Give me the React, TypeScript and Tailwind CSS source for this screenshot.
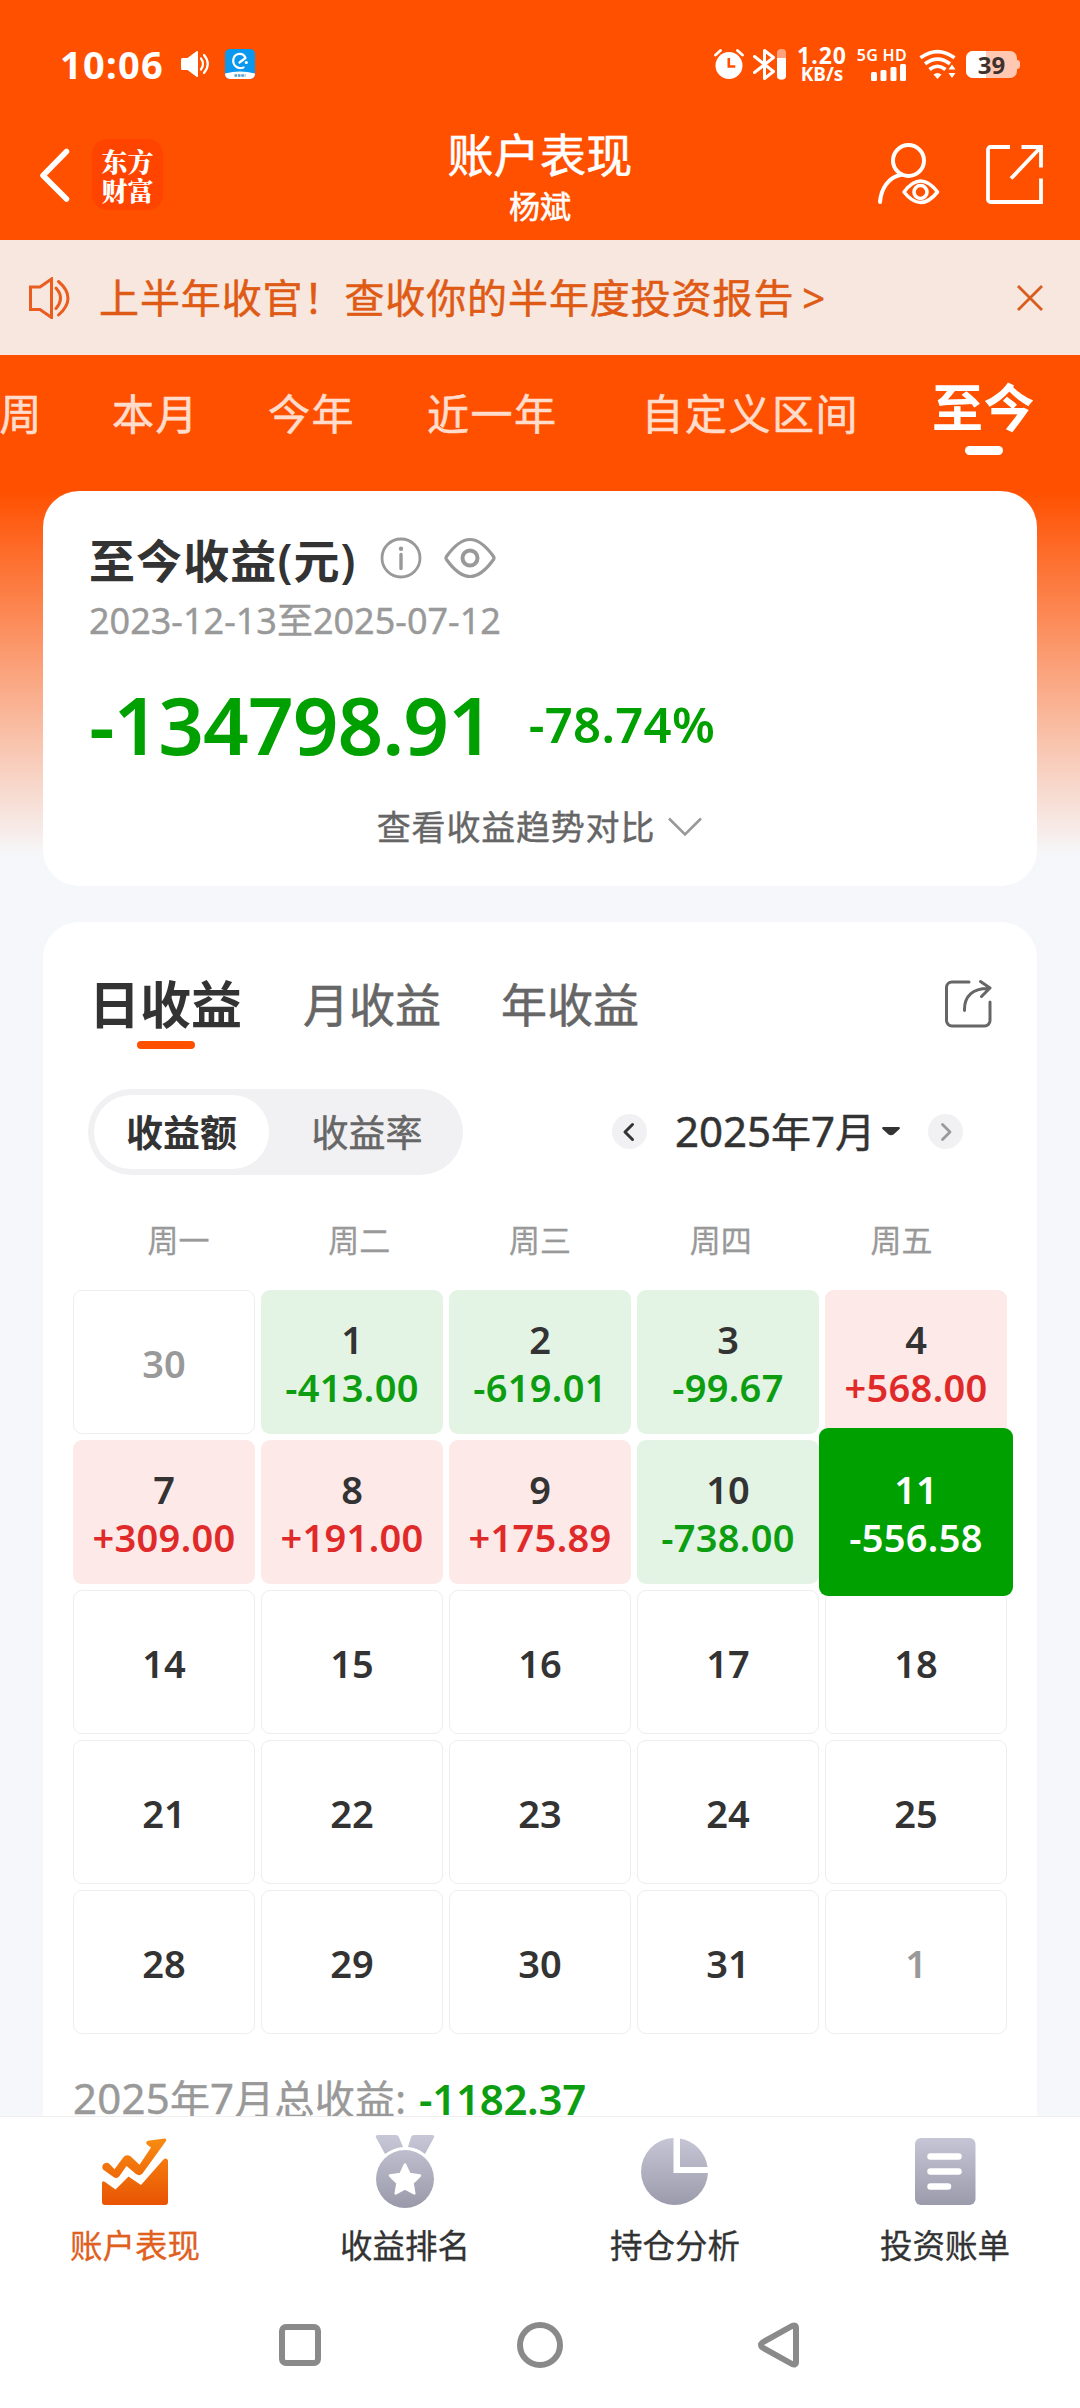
import type { ReactNode } from "react";
import clsx from "clsx";

type DayCell = {
  day: string;
  value?: string;
  muted?: boolean;
  selected?: boolean;
};

const ranges = [
  { label: "本月", className: "ml-[69px]" },
  { label: "今年", className: "ml-[69px]" },
  { label: "近一年", className: "ml-[72px]" },
  { label: "自定义区间", className: "ml-[84px]" },
];

const weekdays = ["周一", "周二", "周三", "周四", "周五"];

const days: DayCell[] = [
  { day: "30", muted: true },
  { day: "1", value: "-413.00" },
  { day: "2", value: "-619.01" },
  { day: "3", value: "-99.67" },
  { day: "4", value: "+568.00" },
  { day: "7", value: "+309.00" },
  { day: "8", value: "+191.00" },
  { day: "9", value: "+175.89" },
  { day: "10", value: "-738.00" },
  { day: "11", value: "-556.58", selected: true },
  { day: "14" },
  { day: "15" },
  { day: "16" },
  { day: "17" },
  { day: "18" },
  { day: "21" },
  { day: "22" },
  { day: "23" },
  { day: "24" },
  { day: "25" },
  { day: "28" },
  { day: "29" },
  { day: "30" },
  { day: "31" },
  { day: "1", muted: true },
];

/* ── Status bar ── */
function StatusBar() {
  return (
    <div className="h-[114px] pt-[14px] pl-[60px] pr-[60px] flex items-center text-white shrink-0">
      <span className="w-[104px] text-[38px] leading-none font-bold tracking-[1.3px] whitespace-nowrap">
        10:06
      </span>
      <svg className="ml-[17px]" width="29" height="28" viewBox="0 0 29 28">
        <path d="M1.5 8h5L15.500 1.200q1.500-.8 1.500.8v24q0 1.600-1.500.8L6.500 20h-5Q0 20 0 18.500v-9Q0 8 1.500 8z" fill="#fff" />
        <path d="M20 8.500q4 5.500 0 11M23 5q7.500 9 0 18" fill="none" stroke="#fff" strokeWidth="2.200" strokeLinecap="round" />
      </svg>
      <svg className="ml-[15px]" width="30" height="30" viewBox="0 0 30 30">
        <rect width="30" height="30" rx="5" fill="#0a97ee" />
        <path d="M0 24.500q15-4 30 0V25a5 5 0 0 1-5 5H5a5 5 0 0 1-5-5z" fill="#fff" />
        <path d="M14.500 13.500l6-4.500C18.500 3.500 10.500 3.500 8.500 9.500c-1.500 7 4 11 10 9" fill="none" stroke="#fff" strokeWidth="2.200" strokeLinecap="round" strokeLinejoin="round" />
        <circle cx="21.300" cy="13.500" r="1.600" fill="#fff" />
        <path d="M9.500 26.500h11" stroke="#5b9ac4" strokeWidth="2.600" strokeDasharray="2.600 .8" />
      </svg>

      <div className="ml-auto flex items-center">
        <svg width="30" height="30" viewBox="0 0 30 30">
          <circle cx="15" cy="16.500" r="13.500" fill="#fff" />
          <path d="M1.500 6l5-4.500M28.500 6l-5-4.500" stroke="#fff" strokeWidth="2.800" strokeLinecap="round" />
          <path d="M14.800 9v8.500h6.500" fill="none" stroke="#ff5000" strokeWidth="2.600" />
        </svg>
        <svg className="ml-[9px]" width="34" height="31" viewBox="0 0 34 31">
          <path d="M1.500 7.500l19 15-9 7V1.500l9 7-19 15" fill="none" stroke="#fff" strokeWidth="3" strokeLinecap="round" strokeLinejoin="round" />
          <rect x="24" y="0" width="9" height="30.500" rx="4" fill="#ffa37d" />
          <path d="M24 9h9v17.500a4 4 0 0 1-4 4h-1a4 4 0 0 1-4-4z" fill="#fff" />
        </svg>
        <div className="ml-[11px] w-[48px] flex flex-col items-center font-bold leading-none">
          <span className="text-[23px] h-[19px] leading-[19px] tracking-[1px]">1.20</span>
          <span className="text-[19px] h-[18px] leading-[18px]">KB/s</span>
        </div>
        <div className="ml-[11px] w-[50px] flex flex-col items-end">
          <span className="text-[16px] h-[17px] leading-[16px] font-semibold whitespace-nowrap tracking-[0.3px]">5G HD</span>
          <svg width="36" height="17" viewBox="0 0 36 17">
            <rect x="0" y="8" width="6" height="9" rx="1.500" fill="#fff" />
            <rect x="9.500" y="6" width="6" height="11" rx="1.500" fill="#fff" />
            <rect x="19.500" y="3" width="6" height="14" rx="1.500" fill="#fff" />
            <rect x="29" y="0" width="6" height="17" rx="1.500" fill="#fff" />
          </svg>
        </div>
        <svg className="ml-[12px]" width="38" height="31" viewBox="0 0 38 31">
          <g fill="none" stroke="#fff" strokeWidth="3.600">
            <path d="M1.500 8.800q17-12.500 34 0" />
            <path d="M6 14.800q12.500-9.500 25 0" />
            <path d="M10.500 20.500q8-6.500 16 0" />
          </g>
          <path d="M14.500 25.500q4-3 8 0L18.500 30z" fill="#fff" />
          <path d="M33 15.500l3.500 5h-7zM33 29l3.500-5h-7z" fill="#fff" />
        </svg>
        <div className="ml-[9px] relative w-[51px] h-[27px] rounded-[7px] bg-[#ffc8b2]">
          <div className="w-[20px] h-full rounded-l-[7px] bg-white" />
          <span className="absolute inset-0 text-center text-[24px] leading-[27px] font-bold text-[#3d322d]">
            39
          </span>
        </div>
        <div className="w-[3px] h-[9px] rounded-r-[3px] bg-[#ffc8b2]" />
      </div>
    </div>
  );
}

/* ── Title bar ── */
function TitleBar() {
  return (
    <div className="h-[126px] px-[36px] flex justify-between shrink-0 text-white">
      <div className="w-[220px] flex pt-[25px]">
        <svg className="mt-[8px]" width="36" height="56" viewBox="0 0 36 56">
          <path d="M30.500 4.500L7 28.500l23.500 23.500" fill="none" stroke="#fff" strokeWidth="5.500" strokeLinecap="round" strokeLinejoin="round" />
        </svg>
        <div className="ml-[20px] w-[71px] h-[71px] rounded-[15px] bg-[#ff4400] flex flex-col items-center justify-center text-[26px] leading-[29px] font-black font-['Noto_Serif_CJK_SC','Noto_Sans_CJK_SC',serif]">
          <span>东方</span>
          <span>财富</span>
        </div>
      </div>
      <div className="flex flex-col items-center [-webkit-text-stroke:0.6px]">
        <span className="mt-[12px] text-[46px] leading-[56px] tracking-[0.3px]">账户表现</span>
        <span className="mt-[6px] text-[31px] leading-[36px]">杨斌</span>
      </div>
      <div className="w-[220px] flex justify-end pt-[28px]">
        <svg width="64" height="64" viewBox="0 0 64 64" fill="none" stroke="#fff" strokeWidth="4" strokeLinecap="round">
          <circle cx="31.500" cy="18.500" r="15.500" />
          <path d="M3 60c1-13 8-25 22-27.500" />
          <path d="M27 50Q43.500 28 60.500 50 43.500 71 27 50z" strokeLinejoin="round" strokeWidth="3.600" />
          <circle cx="43.500" cy="50" r="6.500" strokeWidth="3.600" />
        </svg>
        <svg className="ml-[45px] mt-[3px]" width="58" height="59" viewBox="0 0 58 59" fill="none" stroke="#fff" strokeWidth="3.800">
          <path d="M24 2H4.500A2.500 2.500 0 0 0 2 4.500v50A2.500 2.500 0 0 0 4.500 57H55V33.500" />
          <path d="M35.500 2H55v20.500M54 3L25 33.500" />
        </svg>
      </div>
    </div>
  );
}

/* ── Notice strip ── */
function Notice() {
  return (
    <div className="h-[115px] pl-[29px] pr-[36px] flex items-center shrink-0 bg-[#f7e7df] text-[#df5a14] [-webkit-text-stroke:0.5px]">
      <svg width="42" height="42" viewBox="0 0 42 42" fill="none" stroke="#ea5c20" strokeWidth="3">
        <path d="M1.500 10h9.500L22.500 2v38.500L11 32.500H1.500z" />
        <path d="M27 11q9 10 0 20.500M29.500 4.500q19 16.500 0 33.500" strokeLinecap="round" />
      </svg>
      <span className="ml-[28px] text-[40px] leading-none tracking-[0.9px] whitespace-nowrap">
        上半年收官！查收你的半年度投资报告
      </span>
      <span className="ml-[8px] text-[40px] leading-none">&gt;</span>
      <svg className="ml-auto" width="28" height="28" viewBox="0 0 28 28">
        <path d="M2 2l24 24M26 2L2 26" stroke="#d85c1c" strokeWidth="2.800" />
      </svg>
    </div>
  );
}

/* ── Range tabs, scrolled to the end ── */
function RangeTabs() {
  return (
    <div className="h-[136px] flex shrink-0 overflow-hidden text-[42px] leading-[60px] text-[#ffdccb] tracking-[1.5px] whitespace-nowrap [-webkit-text-stroke:0.6px]">
      <span className="mt-[29px] w-[43px] flex justify-end">周</span>
      {ranges.map((r) => (
        <span key={r.label} className={clsx("mt-[29px]", r.className)}>
          {r.label}
        </span>
      ))}
      <div className="ml-[73px] mt-[22px] flex flex-col items-center">
        <span className="text-[51px] leading-[60px] font-bold text-white tracking-[0.5px] [-webkit-text-stroke:0]">至今</span>
        <span className="mt-[9px] w-[38px] h-[9px] rounded-full bg-white" />
      </div>
    </div>
  );
}

function SummaryCard() {
  return (
    <div className="h-[395px] rounded-[36px] bg-white px-[46px] pt-[39px]">
      <div className="flex items-center h-[60px]">
        <span className="text-[46px] leading-[60px] font-semibold tracking-[1.1px] text-[#333]">至今收益(元)</span>
        <svg className="ml-[23px] mb-[4px]" width="42" height="42" viewBox="0 0 42 42" fill="none" stroke="#999" strokeWidth="2.800">
          <circle cx="21" cy="21" r="19" />
          <path d="M21 17.500v14" strokeWidth="3.400" strokeLinecap="round" />
          <circle cx="21" cy="11.800" r="2.200" fill="#999" stroke="none" />
        </svg>
        <svg className="ml-[22px] mb-[4px]" width="52" height="42" viewBox="0 0 52 42" fill="none" stroke="#999" strokeWidth="3.200">
          <path d="M2.500 19.500C10 9 17 2.500 26 2.500S42 9 49.500 19.500q1 1.500 0 3C42 33 35 39.500 26 39.500S10 33 2.500 22.500q-1-1.500 0-3z" />
          <circle cx="26" cy="21" r="7.500" strokeWidth="4" />
        </svg>
      </div>
      <p className="mt-[7px] text-[36px] leading-[48px] text-[#999] whitespace-nowrap [-webkit-text-stroke:0.4px]">
        2023-12-13至2025-07-12
      </p>
      <div className="mt-[31px] flex items-center h-[96px] font-semibold text-[#00a000]">
        <span className="text-[80px] leading-[96px] tracking-[-1px]">-134798.91</span>
        <span className="ml-[36px] text-[49px] leading-[60px] tracking-[0.3px]">-78.74%</span>
      </div>
      <div className="mt-[30px] flex items-center justify-center text-[#666] [-webkit-text-stroke:0.4px]">
        <span className="text-[34px] leading-[50px] tracking-[0.8px]">查看收益趋势对比</span>
        <svg className="ml-[12px]" width="36" height="22" viewBox="0 0 36 22">
          <path d="M2 2.500l16 16 16-16" fill="none" stroke="#999" strokeWidth="2.600" />
        </svg>
      </div>
    </div>
  );
}

function CalendarCell({ cell }: { cell: DayCell }) {
  const gain = cell.value?.startsWith("+");
  const loss = cell.value?.startsWith("-");

  return (
    <div
      className={clsx(
        "flex flex-col items-center justify-center pt-[2px] rounded-[9px] font-semibold text-[38px] leading-[48px]",
        !cell.value && "border border-[#eeeeee]",
        cell.muted ? "text-[#999]" : cell.selected ? "text-white" : "text-[#333]",
        cell.selected && "z-10 -mx-[6px] -my-[12px] bg-[#00a000]",
        gain && "bg-[#fde9e7]",
        loss && !cell.selected && "bg-[#e3f4e4]",
      )}
    >
      <span>{cell.day}</span>
      {cell.value && (
        <span
          className={clsx(
            "whitespace-nowrap tracking-[0.3px]",
            cell.selected ? "text-white" : gain ? "text-[#e02a2a]" : "text-[#0d9d10]",
          )}
        >
          {cell.value}
        </span>
      )}
    </div>
  );
}

function CalendarCard() {
  return (
    <div className="mt-[36px] h-[1300px] rounded-t-[36px] bg-white overflow-hidden">
      {/* Day / month / year */}
      <div className="h-[127px] pl-[46px] pr-[45px] flex">
        <div className="mt-[52px] flex flex-col items-center">
          <span className="text-[51px] leading-[60px] font-bold text-[#333]">日收益</span>
          <span className="mt-[7px] w-[58px] h-[8px] rounded-full bg-[#ff5000]" />
        </div>
        <span className="mt-[52px] ml-[61px] text-[46px] leading-[60px] text-[#666] [-webkit-text-stroke:0.6px]">月收益</span>
        <span className="mt-[52px] ml-[60px] text-[46px] leading-[60px] text-[#666] [-webkit-text-stroke:0.6px]">年收益</span>
        <svg className="ml-auto mt-[57px]" width="48" height="49" viewBox="0 0 48 49" fill="none" stroke="#666" strokeWidth="3">
          <path d="M25 3H8a5.500 5.500 0 0 0-5.500 5.500v33A5.500 5.500 0 0 0 8 47h32.500a5.500 5.500 0 0 0 5.500-5.500V23" strokeLinecap="round" />
          <path d="M20.500 31.500C20 17 29 9 45 9.500M36.500 2.500L46 9l-8.500 8.500" strokeLinecap="round" strokeLinejoin="round" />
        </svg>
      </div>

      {/* Amount / rate switch and month picker */}
      <div className="mt-[40px] h-[86px] pl-[45px] flex items-center">
        <div className="w-[375px] h-[86px] p-[6px] rounded-full bg-[#f1f1f3] flex text-[37px] leading-[76px]">
          <span className="w-[175px] rounded-full bg-white text-center font-semibold text-[#333]">收益额</span>
          <span className="flex-1 pl-[8px] text-center text-[#666] [-webkit-text-stroke:0.5px]">收益率</span>
        </div>
        <div className="ml-[149px] mb-[2px] flex items-center">
          <svg width="35" height="35" viewBox="0 0 35 35">
            <circle cx="17.500" cy="17.500" r="17.500" fill="#f1f1f3" />
            <path d="M20.500 10.500l-7.500 7.500 7.500 7.500" fill="none" stroke="#333" strokeWidth="3" strokeLinecap="round" strokeLinejoin="round" />
          </svg>
          <span className="ml-[28px] text-[40px] leading-[50px] text-[#333] whitespace-nowrap [-webkit-text-stroke:0.5px]">
            <span className="text-[42px]">2025</span>年<span className="text-[42px]">7</span>月
          </span>
          <svg className="ml-[7px]" width="18" height="9" viewBox="0 0 18 9">
            <path d="M1 0h16q1.500.8.500 2l-6 5.500q-2.500 1.500-5 0L.500 2Q-.500.8 1 0z" fill="#333" />
          </svg>
          <svg className="ml-[28px]" width="35" height="35" viewBox="0 0 35 35">
            <circle cx="17.500" cy="17.500" r="17.500" fill="#f1f1f3" />
            <path d="M14.500 10.500l7.500 7.500-7.500 7.500" fill="none" stroke="#999" strokeWidth="2.800" strokeLinecap="round" strokeLinejoin="round" />
          </svg>
        </div>
      </div>

      {/* Weekday header */}
      <div className="mt-[40px] mx-[45px] grid grid-cols-5 text-center text-[31px] leading-[50px] text-[#999] [-webkit-text-stroke:0.3px]">
        {weekdays.map((d) => (
          <span key={d}>{d}</span>
        ))}
      </div>

      {/* Days */}
      <div className="mt-[25px] mx-[30px] grid grid-cols-5 auto-rows-[144px] gap-[6px]">
        {days.map((cell, i) => (
          <CalendarCell key={i} cell={cell} />
        ))}
      </div>

      <div className="mt-[37px] pl-[30px] flex items-center text-[40px] leading-[54px] text-[#999] whitespace-nowrap">
        <span className="tracking-[0.2px] [-webkit-text-stroke:0.4px]">
          <span className="text-[42px]">2025</span>年<span className="text-[42px]">7</span>月总收益:
        </span>
        <span className="ml-[13px] text-[42px] font-semibold tracking-[-0.3px] text-[#0d9d10]">-1182.37</span>
      </div>
    </div>
  );
}

function NavItem({ label, active, children }: { label: string; active?: boolean; children: ReactNode }) {
  return (
    <div className="flex flex-col items-center pt-[16px]">
      <svg width="76" height="76" viewBox="0 0 76 76">
        {children}
      </svg>
      <span
        className={clsx(
          "mt-[13px] text-[32.500px] leading-[48px] [-webkit-text-stroke:0.3px]",
          active ? "text-[#e0601e]" : "text-[#333]",
        )}
      >
        {label}
      </span>
    </div>
  );
}

function BottomNav() {
  return (
    <div className="h-[292px] shrink-0 bg-white border-t border-[#eeeeee]">
      <svg className="absolute" width="0" height="0">
        <defs>
          <linearGradient id="nav-hot" x1="0" y1="5" x2="0" y2="70" gradientUnits="userSpaceOnUse">
            <stop offset="0" stopColor="#f98c12" />
            <stop offset="1" stopColor="#e95504" />
          </linearGradient>
          <linearGradient id="nav-cold" x1="0" y1="2" x2="0" y2="75" gradientUnits="userSpaceOnUse">
            <stop offset="0" stopColor="#c8c7d8" />
            <stop offset="1" stopColor="#9a99a9" />
          </linearGradient>
        </defs>
      </svg>
      <div className="grid grid-cols-4">
        <NavItem label="账户表现" active>
          <path
            d="M6 31.500q4-3.500 7.500.500l4 4.200 8.500-11.500q3-4 7.500-1.500l9 8.500L54 14.500l-4-3q-2-2.500 1-3.800L67.500 5.500q2.500 0 1.500 2.500L45.500 40.500q-3 3-6.500.5l-9.500-8-7 10q-2.500 3.500-6 1L6 36.500q-1.500-3 0-5z"
            fill="url(#nav-hot)"
          />
          <path
            d="M5 50q.500-3 3-1l10.500 7.500L31.500 43.500l12.500 8.500L66 27q3.500-3 5 .500V69q0 3-3 3H8q-3 0-3-3z"
            fill="url(#nav-hot)"
          />
        </NavItem>
        <NavItem label="收益排名">
          <path d="M11 2h18q2 0 2.800 1.800L36 14Q26 15 18 21L9 4.500Q8 2 11 2zM65 2H47q-2 0-2.800 1.800L41 14q10 1 17 7l9-16.500Q68 2 65 2z" fill="url(#nav-cold)" />
          <circle cx="38" cy="46" r="29" fill="url(#nav-cold)" />
          <path
            d="M38 31.500l4.500 9.500 10.500 1.500-7.500 7.500 1.800 10.500L38 55.500l-9.300 5L30.500 50 23 42.500 33.500 41z"
            fill="#fff"
            stroke="#fff"
            strokeWidth="2.500"
            strokeLinejoin="round"
          />
        </NavItem>
        <NavItem label="持仓分析">
          <path d="M36.500 5A33.500 33.500 0 1 0 71 40H36.500z" fill="url(#nav-cold)" />
          <path d="M43 5.500A33.500 33.500 0 0 1 70.500 34H43z" fill="url(#nav-cold)" />
        </NavItem>
        <NavItem label="投资账单">
          <rect x="8" y="5" width="60.500" height="67" rx="6" fill="url(#nav-cold)" />
          <path d="M23.500 23.500h28M23.500 38.500h28M23.500 53.500h17.500" stroke="#fff" strokeWidth="6.500" strokeLinecap="round" />
        </NavItem>
      </div>

      {/* System keys */}
      <div className="mt-[51px] px-[277px] flex items-center justify-between">
        <svg width="46" height="48" viewBox="0 0 46 48">
          <rect x="5" y="6" width="36" height="36" rx="4" fill="none" stroke="#8a8a8a" strokeWidth="6" />
        </svg>
        <svg width="48" height="48" viewBox="0 0 48 48">
          <circle cx="24" cy="24" r="20" fill="none" stroke="#8a8a8a" strokeWidth="6" />
        </svg>
        <svg width="46" height="48" viewBox="0 0 46 48">
          <path d="M5.500 21.500L35 5q4-1.500 4 2v34q0 3.500-4 2L5.500 26.500q-3-2.500 0-5z" fill="none" stroke="#8a8a8a" strokeWidth="6" strokeLinejoin="round" />
        </svg>
      </div>
    </div>
  );
}

export default function App() {
  return (
    <div className="w-[1080px] h-[2408px] flex flex-col overflow-hidden bg-[#ff5000] font-['Noto_Sans','Noto_Sans_CJK_SC',sans-serif]">
      <StatusBar />
      <TitleBar />
      <Notice />
      <RangeTabs />
      <div className="flex-1 min-h-0 overflow-hidden px-[43px] bg-[#f6f7fa] bg-[linear-gradient(to_bottom,#ff5000_0,#f6f7fa_364px)]">
        <SummaryCard />
        <CalendarCard />
      </div>
      <BottomNav />
    </div>
  );
}
